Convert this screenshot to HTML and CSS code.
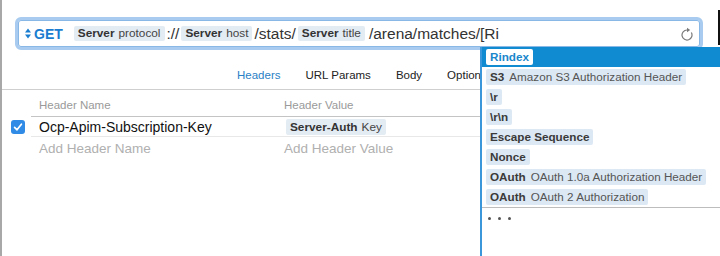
FILE: index.html
```html
<!DOCTYPE html>
<html lang="en">
<head>
    <meta charset="UTF-8">
    <meta name="viewport" content="width=device-width, initial-scale=1.0">
    <link rel="stylesheet" href="styles.css">
</head>
<body>
    <div class="app">
        <div class="url-area">
            <div class="urlbar">
                <span class="method">
                    <svg class="method-arrows" width="6" height="11" viewBox="0 0 6 11">
                        <polygon points="0,4.5 3,0.5 6,4.5" />
                        <polygon points="0,6.5 3,10.5 6,6.5" />
                    </svg>
                    GET
                </span>
                <div class="url">
                    <span class="token"><b>Server</b>protocol</span>
                    <span class="path">://</span>
                    <span class="token"><b>Server</b>host</span>
                    <span class="path">/stats/</span>
                    <span class="token"><b>Server</b>title</span>
                    <span class="path">/arena/matches/[Ri</span>
                </div>
                <svg class="reload" width="14" height="14" viewBox="0 0 14 14">
                    <path d="M7 3 A5 5 0 1 0 11.33 5.5" fill="none" stroke="#7a7a7a" stroke-width="1.2" />
                    <polygon points="7,0.8 10.2,3 7,5.2" fill="#7a7a7a" />
                </svg>
            </div>
        </div>

        <nav class="tabs">
            <span class="tab active">Headers</span>
            <span class="tab">URL Params</span>
            <span class="tab">Body</span>
            <span class="tab">Options</span>
        </nav>

        <div class="headers">
            <div class="row head">
                <div class="check-cell"></div>
                <div class="cells">
                    <span>Header Name</span>
                    <span>Header Value</span>
                </div>
            </div>
            <div class="row entry">
                <div class="check-cell">
                    <span class="checkbox">
                        <svg width="14" height="14" viewBox="0 0 14 14">
                            <path d="M3.6 7.4 L6 9.8 L10.4 4.2" fill="none" stroke="#fff" stroke-width="1.7" stroke-linecap="round" stroke-linejoin="round" />
                        </svg>
                    </span>
                </div>
                <div class="cells">
                    <span class="name">Ocp-Apim-Subscription-Key</span>
                    <span><span class="token value-token"><b>Server-Auth</b>Key</span></span>
                </div>
            </div>
            <div class="row placeholder">
                <div class="check-cell"></div>
                <div class="cells">
                    <span>Add Header Name</span>
                    <span>Add Header Value</span>
                </div>
            </div>
        </div>

        <div class="completions">
            <div class="item selected"><span class="chip"><b>Rindex</b></span></div>
            <div class="item"><span class="chip"><b>S3</b><span class="desc">Amazon S3 Authorization Header</span></span></div>
            <div class="item"><span class="chip"><b>\r</b></span></div>
            <div class="item"><span class="chip"><b>\r\n</b></span></div>
            <div class="item"><span class="chip"><b>Escape Sequence</b></span></div>
            <div class="item"><span class="chip"><b>Nonce</b></span></div>
            <div class="item"><span class="chip"><b>OAuth</b><span class="desc">OAuth 1.0a Authorization Header</span></span></div>
            <div class="item"><span class="chip"><b>OAuth</b><span class="desc">OAuth 2 Authorization</span></span></div>
            <div class="more">
                <span class="dot"></span><span class="dot"></span><span class="dot"></span>
            </div>
        </div>

        <div class="window-edge"></div>
    </div>
</body>
</html>
```

FILE: styles.css
```css
html, body {
    margin: 0;
    padding: 0;
    background: #fff;
}

body {
    font-family: 'Liberation Sans', Arial, sans-serif;
    color: #222;
}

.app {
    position: relative;
    height: 256px;
    border-left: 2px solid #a8a8a8;
    overflow: hidden;
}

/* url bar */
.url-area {
    padding: 17px 17px 0 13px;
}

.urlbar {
    height: 33px;
    box-sizing: border-box;
    border: 3px solid #a8cbef;
    border-radius: 6px;
    box-shadow: inset 0 0 0 1px #8ab8e6;
    display: flex;
    align-items: center;
    padding: 0 6px 0 7px;
}

.method {
    display: flex;
    align-items: center;
    gap: 3px;
    font-size: 14px;
    font-weight: 700;
    color: #1b7dd0;
    margin-right: 11px;
}

.method-arrows {
    fill: #1b7dd0;
}

.url {
    flex-grow: 1;
    display: flex;
    align-items: center;
    gap: 2px;
}

.token {
    display: inline-block;
    height: 15px;
    line-height: 15px;
    padding: 0 4px;
    border-radius: 2px;
    background: #e3ebf3;
    font-size: 11.8px;
    color: #444;
}

.token b {
    color: #333;
    margin-right: 4px;
}

.path {
    font-size: 15.5px;
    color: #333;
}

.path:last-child {
    margin-left: 2px;
}

.reload {
    display: block;
}

/* tabs */
.tabs {
    display: flex;
    gap: 25px;
    padding: 17px 0 6px 235px;
    line-height: 16px;
    font-size: 11.5px;
    border-bottom: 1px solid #cfcfcf;
}

.tab {
    color: #222;
}

.tab.active {
    color: #2a7fc6;
}

/* headers table */
.row {
    display: flex;
}

.check-cell {
    width: 29px;
    display: flex;
    align-items: center;
}

.cells {
    flex-grow: 1;
    display: grid;
    grid-template-columns: 245px 1fr;
    align-items: center;
    padding-left: 8px;
}

.row.head .cells {
    padding-top: 7px;
    padding-bottom: 3px;
    line-height: 16px;
    font-size: 11.5px;
    color: #9a9a9a;
    border-bottom: 1px solid #c4c4c4;
}

.row.entry .cells {
    height: 19px;
    font-size: 14px;
    color: #111;
    border-bottom: 1px solid #e8e8e8;
}

.row.placeholder .cells {
    height: 22px;
    font-size: 13.5px;
    color: #b0b0b0;
}

.value-token {
    margin-left: 2px;
    height: 16px;
    line-height: 16px;
    font-size: 11.8px;
}

.checkbox {
    display: block;
    width: 14px;
    height: 14px;
    margin-left: 9px;
    border-radius: 3px;
    background: #2f8be6;
}

.checkbox svg {
    display: block;
}

/* completion popup, drawn over the editor */
.completions {
    position: absolute;
    left: 478px;
    top: 47px;
    right: 0;
    bottom: 0;
    background: #fff;
    border-left: 2px solid #3b97d9;
    font-size: 11.7px;
}

.item {
    height: 20px;
    display: flex;
    align-items: center;
    padding-left: 4px;
}

.item:nth-child(8) {
    border-bottom: 1px solid #bdbdbd;
}

.item.selected {
    background: #108bd1;
}

.chip {
    display: inline-block;
    height: 16px;
    line-height: 16px;
    padding: 0 4px;
    border-radius: 2px;
    background: #dce8f4;
    color: #3a3a3a;
}

.chip .desc {
    margin-left: 5px;
    color: #555;
}

.item.selected .chip {
    background: #fff;
}

.item.selected .chip b {
    color: #1a86cc;
}

.more {
    display: flex;
    gap: 7px;
    padding: 9px 0 0 6px;
}

.dot {
    width: 3px;
    height: 3px;
    border-radius: 50%;
    background: #555;
}

.window-edge {
    position: absolute;
    top: 10px;
    right: 0;
    width: 2px;
    height: 35px;
    background: #111;
}
```
